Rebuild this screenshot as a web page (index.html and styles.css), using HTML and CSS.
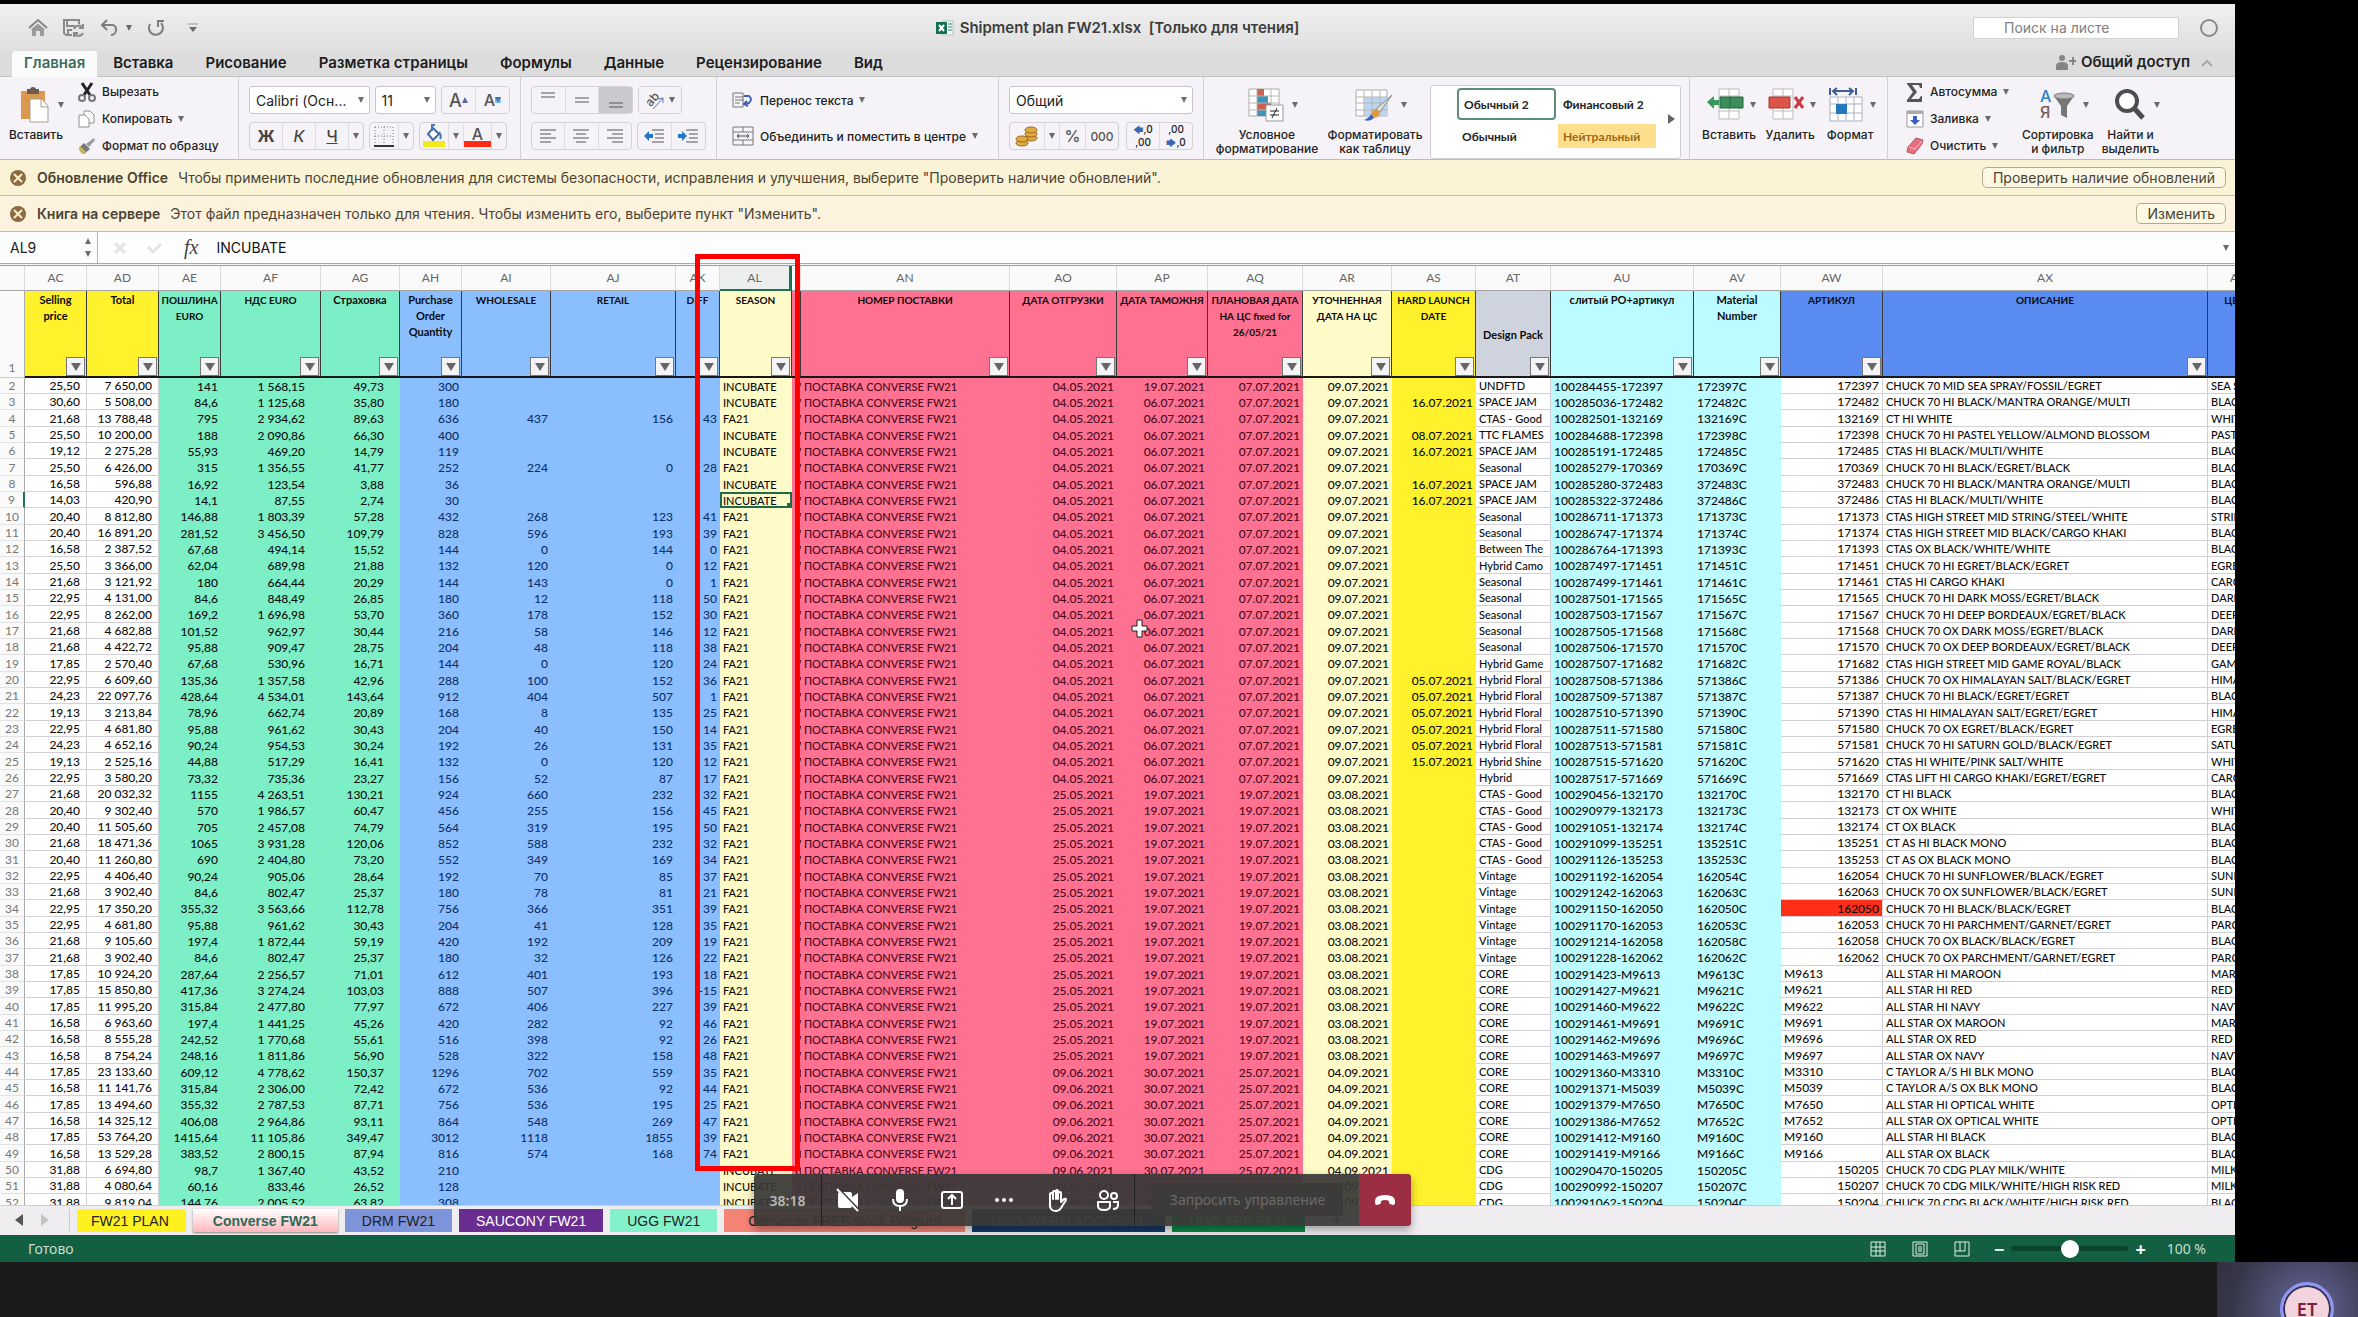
FILE: index.html
```html
<!DOCTYPE html>
<html lang="ru">
<head>
<meta charset="utf-8">
<title>Shipment plan FW21.xlsx</title>
<link rel="stylesheet" href="styles.css">
</head>
<body>
<div class="stage">
  <main class="window">
    <header class="titlebar">
      <div class="quick">
        <button aria-label="Домой"><svg width="20" height="20" viewBox="0 0 20 20"><path d="M1 10 10 2l9 8M4 12l6-5 6 5" fill="none" stroke="#858585" stroke-width="2"/><path d="M4 11l6-5 6 5v7h-4v-5H8v5H4z" fill="#9a9a9a"/></svg></button>
        <button aria-label="Сохранить"><svg width="22" height="20" viewBox="0 0 22 20" fill="none" stroke="#8a8a8a" stroke-width="2"><path d="M9 17H3l-2-2V2h15v4M4 2v6h8M5 17v-5h4"/><path d="M20 10a5 5 0 0 0-9 1M11 15a5 5 0 0 0 9 0M20 6v4h-4M11 19v-4h4"/></svg></button>
        <button class="undo" aria-label="Отменить"><svg width="20" height="20" viewBox="0 0 20 20" fill="none" stroke="#7c7c7c" stroke-width="2"><path d="M7 2 2 7l5 5M2 7h10a4 4 0 0 1 4 4v1a5 5 0 0 1-5 5"/></svg><span class="tri"></span></button>
        <button aria-label="Повторить"><svg width="20" height="20" viewBox="0 0 20 20" fill="none" stroke="#7c7c7c" stroke-width="2"><path d="M3 6a7 7 0 1 0 11-1M11 9V3h6"/></svg></button>
        <button class="more" aria-label="Настроить панель"><svg width="14" height="14" viewBox="0 0 14 14"><path d="M2 3h10" stroke="#999" stroke-width="1"/><path d="M3 6h8l-4 5z" fill="#6d6d6d"/></svg></button>
      </div>
      <h1 class="doc"><svg width="18" height="16" viewBox="0 0 18 16"><path d="M7 1h10v14H7z" fill="#fff" stroke="#9fc5b4"/><path d="M12 4h4M12 7h4M12 10h4" stroke="#1d8060"/><path d="M0 2h11v12H0z" fill="#14704f"/><path d="m3 5 5 6M8 5l-5 6" stroke="#fff" stroke-width="2"/></svg>Shipment plan FW21.xlsx&nbsp; [Только для чтения]</h1>
      <div class="find">
        <input type="text" placeholder="Поиск на листе" aria-label="Поиск на листе">
        <svg width="20" height="20" viewBox="0 0 20 20"><circle cx="10" cy="10" r="8" fill="none" stroke="#8a8a8a" stroke-width="2"/></svg>
      </div>
    </header>
    <nav class="tabs">
      <button class="tab active">Главная</button><button class="tab">Вставка</button><button class="tab">Рисование</button><button class="tab">Разметка страницы</button><button class="tab">Формулы</button><button class="tab">Данные</button><button class="tab">Рецензирование</button><button class="tab">Вид</button>
      <button class="share"><svg width="20" height="16" viewBox="0 0 20 16" fill="#858585"><circle cx="6" cy="4" r="3"/><path d="M0 16v-4q0-4 6-4t6 4v4zM13 6h3V3h2v3h2v2h-2v3h-2V8h-3z"/></svg>Общий доступ</button>
      <svg class="chev" width="16" height="12" viewBox="0 0 16 12"><path d="m3 8 5-5 5 5" fill="none" stroke="#a9a9a9" stroke-width="2"/></svg>
    </nav>

    <section class="ribbon">
      <div class="group clip">
        <button class="big"><span class="pic"><svg width="30" height="36" viewBox="0 0 30 36"><path d="M1 4h24v28H1z" fill="#d99a4e"/><path d="M7 2h12v5H7z" fill="#6d5a52"/><circle cx="13" cy="3" r="3" fill="#6d5a52"/><path d="M10 12h12l6 7v16H10z" fill="#fff" stroke="#a59d8c"/><path d="M21 12v8h7" fill="none" stroke="#a59d8c"/></svg><span class="tri"></span></span>Вставить</button>
        <div class="lines">
          <button><svg width="18" height="20" viewBox="0 0 18 20" fill="none"><path d="m4 1 8 12M14 1 6 13" stroke="#222" stroke-width="3"/><circle cx="4" cy="16" r="3" stroke="#777" stroke-width="2"/><circle cx="14" cy="16" r="3" stroke="#777" stroke-width="2"/></svg>Вырезать</button>
          <button><svg width="18" height="18" viewBox="0 0 18 18" fill="#fff" stroke="#8e8e8e"><path d="M6 1h6l4 4v8H6z"/><path d="M1 5h6l4 4v8H1z"/></svg>Копировать<span class="tri"></span></button>
          <button><svg width="18" height="18" viewBox="0 0 18 18"><path d="m16 1 1 2-6 7-3-3z" fill="#999"/><path d="m6 6 6 6-6 5-5-6z" fill="#767a80"/><path d="m2 9 6 6-4 2-3-4z" fill="#c9b84e"/></svg>Формат по образцу</button>
        </div>
      </div>
      <div class="group stack font">
        <div class="row">
          <span class="sel face"><select aria-label="Шрифт"><option>Calibri (Осн...</option></select></span>
          <span class="sel size"><select aria-label="Размер"><option>11</option></select></span>
          <span class="seg grow"><button class="letter">А<span class="tri up"></span></button><button class="letter small">А<span class="tri blue"></span></button></span>
        </div>
        <div class="row">
          <span class="seg biu"><button><b>Ж</b></button><button><i>К</i></button><button><u>Ч</u></button><button class="thin" aria-label="Подчёркивание"><span class="tri"></span></button></span>
          <span class="seg"><button class="mid" aria-label="Границы"><svg width="20" height="21" viewBox="0 0 20 21"><path d="M1 1h18v18M1 1v18M10 1v18M1 10h18" fill="none" stroke="#777" stroke-dasharray="1 2"/><path d="M0 20h20" stroke="#333" stroke-width="2"/></svg></button><button class="thin" aria-label="Виды границ"><span class="tri"></span></button></span>
          <span class="seg"><button class="mid" aria-label="Цвет заливки"><svg width="24" height="24" viewBox="0 0 24 24"><path d="M1 17h22v6H1z" fill="#f0ea1c"/><path d="m11 4 6 6-6 6-5-6z" fill="#fff" stroke="#456a9c" stroke-width="2"/><path d="M10 7V1h3M17 8q3 4 1 7" stroke="#4878b8" stroke-width="2" fill="none"/></svg></button><button class="thin" aria-label="Другие цвета"><span class="tri"></span></button><button class="mid colour">А</button><button class="thin" aria-label="Цвета текста"><span class="tri"></span></button></span>
        </div>
      </div>
      <div class="group stack">
        <div class="row">
          <span class="seg three"><button aria-label="По верхнему краю"><svg width="18" height="18" viewBox="0 0 18 18" stroke="#555" stroke-width="1"><path d="M2 2h14M2 6h14"/></svg></button><button aria-label="По середине"><svg width="18" height="18" viewBox="0 0 18 18" stroke="#555" stroke-width="1"><path d="M2 7h14M2 11h14"/></svg></button><button class="on" aria-label="По нижнему краю"><svg width="18" height="18" viewBox="0 0 18 18" stroke="#555" stroke-width="1"><path d="M2 12h14M2 16h14"/></svg></button></span>
          <span class="seg orient"><button aria-label="Ориентация"><svg width="20" height="22" viewBox="0 0 20 22"><text x="1" y="14" transform="rotate(-50 8 11)" font-size="12" fill="#555">ab</text><path d="m8 20 10-11M18 9v5M18 9l-5 1" stroke="#6b78a0" fill="none"/></svg><span class="tri"></span></button></span>
        </div>
        <div class="row">
          <span class="seg three"><button aria-label="По левому краю"><svg width="18" height="16" viewBox="0 0 18 16" stroke="#555"><path d="M1 2h16M1 6h11M1 10h16M1 14h11"/></svg></button><button aria-label="По центру"><svg width="18" height="16" viewBox="0 0 18 16" stroke="#555"><path d="M1 2h16M4 6h10M1 10h16M4 14h10"/></svg></button><button aria-label="По правому краю"><svg width="18" height="16" viewBox="0 0 18 16" stroke="#555"><path d="M1 2h16M6 6h11M1 10h16M6 14h11"/></svg></button></span>
          <span class="seg two"><button aria-label="Уменьшить отступ"><svg width="20" height="16" viewBox="0 0 20 16"><path d="M8 2h12M11 6h9M11 10h9M8 14h12" stroke="#555"/><path d="M0 8l5-5v3h4v4H5v3z" fill="#2277cc"/></svg></button><button aria-label="Увеличить отступ"><svg width="20" height="16" viewBox="0 0 20 16"><path d="M8 2h12M11 6h9M11 10h9M8 14h12" stroke="#555"/><path d="M9 8 4 3v3H0v4h4v3z" fill="#2277cc"/></svg></button></span>
        </div>
      </div>
      <div class="group stack wrap">
        <button class="flat"><svg width="22" height="18" viewBox="0 0 22 18" fill="none"><path d="M1 2h10v14H1zM3 6h9M3 9h9M3 12h5" stroke="#777"/><path d="M12 5h5q4 3 0 7l-4 1M15 10l-3 3 4 2" stroke="#4462b0" stroke-width="2"/></svg>Перенос текста<span class="tri"></span></button>
        <button class="flat"><svg width="22" height="20" viewBox="0 0 22 20" fill="none" stroke="#777"><path d="M1 1h20v18H1zM1 6h20M1 14h20M11 1v5M11 14v5"/><path d="M5 10h12M7 8l-2 2 2 2M15 8l2 2-2 2" stroke="#444"/></svg>Объединить и поместить в центре<span class="tri"></span></button>
      </div>
      <div class="group stack number">
        <span class="sel"><select aria-label="Числовой формат"><option>Общий</option></select></span>
        <div class="row">
          <span class="seg money"><button aria-label="Денежный"><svg width="24" height="22" viewBox="0 0 24 22" fill="#e0ab3c" stroke="#96661c"><ellipse cx="16" cy="13" rx="6" ry="3"/><ellipse cx="16" cy="9" rx="6" ry="3"/><ellipse cx="16" cy="5" rx="6" ry="3"/><ellipse cx="7" cy="18" rx="6" ry="3"/><ellipse cx="7" cy="14" rx="6" ry="3"/></svg></button><button class="thin" aria-label="Валюты"><span class="tri"></span></button><button class="pct">%</button><button class="zeros">000</button></span>
          <span class="seg dec"><button><span class="arrow">🡄</span>,0<br>,00</button><button>,00<br><span class="arrow">🡆</span>,0</button></span>
        </div>
      </div>
      <div class="group styles">
        <button class="big"><span class="pic"><svg width="36" height="34" viewBox="0 0 36 34"><path d="M1 1h30v27H1z" fill="#fff" stroke="#aaa"/><path d="M9 1h7v7H9z" fill="#c9624e"/><path d="M9 8h11v7H9z" fill="#3c92b8"/><path d="M9 15h14v7H9z" fill="#c9624e"/><path d="M9 22h9v6H9z" fill="#3c92b8"/><path d="M1 8h30M1 15h30M1 22h30M9 1v27M23 1v27" stroke="#b5b5b5" fill="none"/><path d="M18 17h17v16H18z" fill="#fff" stroke="#999"/><path d="M22 23h9M22 27h9M29 20l-5 10" stroke="#222"/></svg><span class="tri"></span></span>Условное<br>форматирование</button>
        <button class="big"><span class="pic"><svg width="38" height="34" viewBox="0 0 38 34"><path d="M1 2h31v26H1z" fill="#fff" stroke="#aaa"/><path d="M9 9h23v19H9z" fill="#bcd6f2"/><path d="M1 9h31M1 15h31M1 22h31M9 2v26M17 2v26M25 2v26" stroke="#b5b5b5" fill="none"/><path d="m37 7-12 17-4-3z" fill="#ddd" stroke="#888"/><path d="M25 24q0 5-6 6l-3-4q2-5 5-5z" fill="#e09a3c"/><path d="M19 30q-4 4-10 2 5-2 7-6z" fill="#3a62c9"/></svg><span class="tri"></span></span>Форматировать<br>как таблицу</button>
        <div class="gallery">
          <button class="style picked">Обычный 2</button><button class="style">Финансовый 2</button>
          <button class="style">Обычный</button><button class="style neutral">Нейтральный</button>
          <span class="next"></span>
        </div>
      </div>
      <div class="group cells">
        <button class="big"><span class="pic"><svg width="38" height="34" viewBox="0 0 38 34"><path d="M13 1h20v30H13zM13 8h20M13 23h20M23 1v30" fill="#fff" stroke="#bbb"/><path d="M14 9h23v11H14z" fill="#3c8d5c" stroke="#27643e"/><path d="M24 9v11" stroke="#27643e"/><path d="m1 14 7-6v4h5v5H8v4z" fill="#379a58"/></svg><span class="tri"></span></span>Вставить</button>
        <button class="big"><span class="pic"><svg width="36" height="34" viewBox="0 0 36 34"><path d="M5 1h20v30H5zM5 8h20M5 23h20M15 1v30" fill="#fff" stroke="#bbb"/><path d="M1 9h21v11H1z" fill="#dc5347" stroke="#a8352c"/><path d="m27 9 8 11M35 9l-8 11" stroke="#cc3845" stroke-width="3"/></svg><span class="tri"></span></span>Удалить</button>
        <button class="big"><span class="pic"><svg width="36" height="36" viewBox="0 0 36 36"><path d="M2 10h32v24H2zM2 17h32M2 26h32M10 10v24M18 10v24M26 10v24" fill="#fff" stroke="#a9b0bd"/><path d="M8 17h11v10H8z" fill="#2377bd"/><path d="M2 1v7M28 1v7M5 4h20M9 1 5 4l4 4M21 1l4 3-4 4" fill="none" stroke="#3d5f93" stroke-width="2"/></svg><span class="tri"></span></span>Формат</button>
      </div>
      <div class="group edit">
        <div class="lines">
          <button><svg width="18" height="20" viewBox="0 0 18 20"><path d="M1 1h15v5h-2L13 3H6l5 7-6 7h8l2-3h1v6H1v-2l6-8-6-8z" fill="#555"/></svg>Автосумма<span class="tri"></span></button>
          <button><svg width="18" height="18" viewBox="0 0 18 18"><path d="M1 1h16v16H1z" fill="#fff" stroke="#999"/><path d="M1 1h16v3H1z" fill="#aaa"/><path d="M7 6h4v4h3l-5 5-5-5h3z" fill="#3a5fc0"/></svg>Заливка<span class="tri"></span></button>
          <button><svg width="18" height="18" viewBox="0 0 18 18"><path d="m10 1 7 2-1 4-8 10-7-2 1-5z" fill="#e86f7d" stroke="#b65561"/><path d="m3 10 6 2 7-8" fill="none" stroke="#fbc3c8"/></svg>Очистить<span class="tri"></span></button>
        </div>
        <button class="big"><span class="pic"><svg width="36" height="34" viewBox="0 0 36 34"><text x="1" y="14" font-size="16" fill="#2b83cb">А</text><text x="1" y="30" font-size="16" fill="#7b5d55">Я</text><path d="M15 8h20l-7 10v12l-6-3V18z" fill="#777"/><ellipse cx="25" cy="8" rx="10" ry="3" fill="#bbb" stroke="#777"/></svg><span class="tri"></span></span>Сортировка<br>и фильтр</button>
        <button class="big"><span class="pic"><svg width="32" height="34" viewBox="0 0 32 34"><circle cx="13" cy="13" r="10" fill="#fff" stroke="#4d4d4d" stroke-width="4"/><path d="m20 20 9 10" stroke="#4d4d4d" stroke-width="5"/></svg><span class="tri"></span></span>Найти и<br>выделить</button>
      </div>
    </section>

    <div class="notice gold">
      <svg width="18" height="18" viewBox="0 0 18 18"><circle cx="9" cy="9" r="8" fill="#8d6a41"/><path d="m5 5 8 8M13 5l-8 8" stroke="#fdf0cf" stroke-width="2"/></svg>
      <strong>Обновление Office</strong><span>Чтобы применить последние обновления для системы безопасности, исправления и улучшения, выберите "Проверить наличие обновлений".</span>
      <button>Проверить наличие обновлений</button>
    </div>
    <div class="notice">
      <svg width="18" height="18" viewBox="0 0 18 18"><circle cx="9" cy="9" r="8" fill="#8d6a41"/><path d="m5 5 8 8M13 5l-8 8" stroke="#fdf0cf" stroke-width="2"/></svg>
      <strong>Книга на сервере</strong><span>Этот файл предназначен только для чтения. Чтобы изменить его, выберите пункт "Изменить".</span>
      <button>Изменить</button>
    </div>

    <div class="formula">
      <div class="namebox"><input type="text" value="AL9" aria-label="Имя ячейки"><span class="spin"><span class="tri up"></span><span class="tri"></span></span></div>
      <svg class="marks" width="50" height="16" viewBox="0 0 50 16" fill="none" stroke="#e4e4e4" stroke-width="3"><path d="m3 3 10 10M13 3 3 13M36 7l5 5 8-8"/></svg>
      <span class="fx">fx</span>
      <input class="value" type="text" value="INCUBATE" aria-label="Строка формул">
      <span class="tri"></span>
    </div>

    <section class="sheet">
      <table class="grid">
        <colgroup><col class="w25"><col class="w62"><col class="w72"><col class="w62"><col class="w100"><col class="w79"><col class="w62"><col class="w89"><col class="w125"><col class="w44"><col class="w72"><col class="w9"><col class="w209"><col class="w107"><col class="w91"><col class="w95"><col class="w89"><col class="w84"><col class="w75"><col class="w143"><col class="w87"><col class="w102"><col class="w325"><col></colgroup>
        <thead>
          <tr class="letters"><td></td><th>AC</th><th>AD</th><th>AE</th><th>AF</th><th>AG</th><th>AH</th><th>AI</th><th>AJ</th><th>AK</th><th class="cur">AL</th><th></th><th>AN</th><th>AO</th><th>AP</th><th>AQ</th><th>AR</th><th>AS</th><th>AT</th><th>AU</th><th>AV</th><th>AW</th><th>AX</th><th>AY</th></tr>
          <tr class="titles"><th class="num">1</th><th class="yellow">Selling price</th><th class="yellow">Total</th><th class="green upper">ПОШЛИНА EURO</th><th class="green upper">НДС EURO</th><th class="green">Страховка</th><th class="blue">Purchase Order Quantity</th><th class="blue upper">WHOLESALE</th><th class="blue upper">RETAIL</th><th class="blue upper">DIFF</th><th class="cream upper">SEASON</th><th class="pink bare"></th><th class="pink upper">НОМЕР ПОСТАВКИ</th><th class="pink upper">ДАТА ОТГРУЗКИ</th><th class="pink upper">ДАТА ТАМОЖНЯ</th><th class="pink upper">ПЛАНОВАЯ ДАТА НА ЦС fixed for 26/05/21</th><th class="cream upper">УТОЧНЕННАЯ ДАТА НА ЦС</th><th class="yellow upper">HARD LAUNCH DATE</th><th class="grey">Design Pack</th><th class="cyan">слитый PO+артикул</th><th class="cyan">Material Number</th><th class="royal upper">АРТИКУЛ</th><th class="royal upper">ОПИСАНИЕ</th><th class="royal upper bare">ЦВЕТ</th></tr>
        </thead>
        <tbody id="rows"></tbody>
      </table>
      <div class="frame"></div>
      <svg class="pointer" width="17" height="19" viewBox="0 0 17 19"><path d="M6 1h5v6h5v5h-5v6H6v-6H1V7h5z" fill="#fff" stroke="#222"/></svg>
    </section>

    <footer class="books">
      <span class="arrows"><span class="left"></span><span class="right"></span></span>
      <button class="bk lemon">FW21 PLAN</button><button class="bk open">Converse FW21</button><button class="bk drm">DRM FW21</button><button class="bk violet">SAUCONY FW21</button><button class="bk mint">UGG FW21</button><button class="bk coral">Converse FREE stock Belgium</button><button class="bk navy">UGG WARM ACC FW21</button><button class="bk forest">UGG APP FA21</button><button class="plus">+</button>
    </footer>
    <div class="status">
      <span>Готово</span>
      <div class="views">
        <button aria-label="Обычный вид"><svg width="16" height="16" viewBox="0 0 16 16" fill="none" stroke="#e2f0e8"><path d="M1 1h14v14H1zM1 6h14M1 10h14M6 1v14M10 1v14"/></svg></button>
        <button aria-label="Разметка"><svg width="16" height="16" viewBox="0 0 16 16" fill="none" stroke="#e2f0e8"><path d="M1 1h14v14H1zM4 3h8v10H4zM6 6h4M6 8h4M6 10h4"/></svg></button>
        <button aria-label="Страничный"><svg width="16" height="16" viewBox="0 0 16 16" fill="none" stroke="#e2f0e8"><path d="M1 15V1h14v14zM1 10h10V1M6 1v9"/></svg></button>
      </div>
      <div class="zoom"><b>−</b><input type="range" min="0" max="100" value="50" aria-label="Масштаб"><b>+</b></div>
      <span class="pc">100 %</span>
    </div>
  </main>
</div>
<aside class="strip"><div class="person"><span class="avatar">ET</span></div></aside>

<div class="call">
  <span class="time">38:18</span>
  <div class="tools">
    <button aria-label="Камера"><svg width="24" height="24" viewBox="0 0 24 24"><path d="M4 4h10q2 0 2 2v3l6-4v14l-6-4v3q0 2-2 2H4q-2 0-2-2V6q0-2 2-2z" fill="#fff"/><path d="m3 1 20 21" stroke="#3d3b3b" stroke-width="2"/><path d="m1 1 21 22" stroke="#fff" stroke-width="2"/></svg></button>
    <button aria-label="Микрофон"><svg width="20" height="24" viewBox="0 0 20 24"><rect x="6" y="1" width="8" height="14" rx="4" fill="#fff"/><path d="M3 11q0 7 7 7t7-7M10 18v5" fill="none" stroke="#fff" stroke-width="2"/></svg></button>
    <button aria-label="Демонстрация"><svg width="24" height="24" viewBox="0 0 24 24" fill="none" stroke="#fff" stroke-width="2"><rect x="2" y="4" width="20" height="16" rx="2"/><path d="M12 17V8M8 11l4-4 4 4"/></svg></button>
    <button aria-label="Ещё"><svg width="20" height="24" viewBox="0 0 20 24" fill="#fff"><circle cx="3" cy="12" r="2"/><circle cx="10" cy="12" r="2"/><circle cx="17" cy="12" r="2"/></svg></button>
    <button aria-label="Поднять руку"><svg width="22" height="24" viewBox="0 0 22 24" fill="none" stroke="#fff" stroke-width="2" stroke-linejoin="round"><path d="M5 14V6q0-1 1-1t2 1v5-7q0-1 1-1t2 1v7-8q0-1 1-1t1 1v8-6q0-1 2-1 1 0 1 1v9l3-3q2-1 2 1l-5 8q-2 3-5 3-7 0-6-8z"/></svg></button>
    <button aria-label="Участники"><svg width="24" height="24" viewBox="0 0 24 24" fill="none" stroke="#fff" stroke-width="2"><circle cx="8" cy="7" r="4"/><circle cx="18" cy="8" r="3"/><path d="M2 14h12v4q0 4-6 4t-6-4zM17 14h5v3q0 4-5 4"/></svg></button>
  </div>
  <div class="ask"><button>Запросить управление</button></div>
  <button class="hang" aria-label="Завершить"><svg width="22" height="14" viewBox="0 0 22 14"><path d="M1 8q0-6 10-6t10 6v2q0 2-2 2l-3-1q-1 0-1-2V8q-4-2-8 0v1q0 2-1 2l-3 1q-2 0-2-2z" fill="#fff"/></svg></button>
</div>
<script src="rows.js"></script>
</body>
</html>
```
FILE: styles.css
```css
* { box-sizing: border-box; }
body { margin: 0; height: 100vh; display: flex; flex-direction: column; background: #1a1a1a; font-family: Inter, "Noto Sans", sans-serif; color: #222; overflow: hidden; }
button, input, select { font: inherit; color: inherit; border: 0; background: none; padding: 0; margin: 0; }
svg { display: block; flex: none; overflow: visible; }
.stage { flex: 1; min-height: 0; display: flex; background: #000; padding: 4px 123px 0 0; }
.window { flex: 1; min-width: 0; display: flex; flex-direction: column; background: #f5f3f8; }
.tri { width: 0; height: 0; border: 3px solid transparent; border-top: 6px solid #6b6b6b; border-bottom: 0; flex: none; }
.tri.up { border-top: 0; border-bottom: 6px solid #5c679b; }
.tri.blue { border-top-color: #4478a8; }

.titlebar { height: 47px; flex: none; display: grid; grid-template-columns: 1fr auto 1fr; align-items: center; background: linear-gradient(#f0f0f0, #dfdfdf); }
.quick { display: flex; align-items: center; gap: 15px; padding-left: 28px; }
.quick .undo { display: flex; align-items: center; gap: 6px; }
.quick .more { padding-left: 4px; }
.doc { margin: 0; font-size: 15px; font-weight: 600; color: #3d3d3d; display: flex; align-items: center; gap: 6px; }
.find { justify-self: end; display: flex; align-items: center; gap: 20px; padding-right: 16px; }
.find input { width: 206px; height: 22px; background: #fff; border: 1px solid #d2d2d2; padding-left: 30px; font-size: 14px; }
.find input::placeholder { color: #808080; }

.tabs { height: 26px; flex: none; display: flex; align-items: center; padding: 0 20px 0 12px; background: #dcdcdc; border-bottom: 1px solid #c3c3c3; }
.tab { height: 26px; padding: 0 16px 2px; font-size: 15px; font-weight: 600; color: #1c1c1c; }
.tab.active { padding: 0 12px 2px; background: #fbfbfc; color: #3a6e5c; border-radius: 3px 3px 0 0; }
.share { margin-left: auto; display: flex; align-items: center; gap: 5px; padding-bottom: 4px; font-size: 15px; font-weight: 600; }
.chev { margin-left: 9px; }

.ribbon { height: 83px; flex: none; display: grid; grid-template-columns: 239px 282px 196px 282px 205px 486px 198px 1fr; border-bottom: 1px solid #bdbbbd; font-size: 12px; font-weight: 500; }
.group { display: flex; padding: 9px 10px 4px; border-right: 1px solid #d2d0d4; }
.group:last-child { border: 0; }
.big { display: flex; flex-direction: column; align-items: center; line-height: 14px; text-align: center; white-space: nowrap; }
.pic { height: 38px; display: flex; align-items: center; gap: 8px; margin-bottom: 4px; padding-left: 12px; }
.clip { padding-left: 8px; gap: 14px; }
.lines { display: grid; grid-template-rows: repeat(3, 27px); margin-top: -8px; }
.lines button { display: flex; align-items: center; gap: 6px; white-space: nowrap; }
.stack { flex-direction: column; gap: 8px; }
.row { display: flex; gap: 5px; height: 28px; }
.sel { display: flex; align-items: center; position: relative; height: 28px; background: #fff; border: 1px solid #c6c4c8; border-radius: 3px; }
.sel::after { content: ""; position: absolute; right: 5px; border: 3px solid transparent; border-top: 6px solid #6b6b6b; border-bottom: 0; }
.sel select { appearance: none; width: 100%; height: 26px; padding-left: 6px; font-size: 14px; font-weight: 400; }
.face { width: 122px; }
.size { width: 62px; }
.seg { display: flex; border: 1px solid #d3d1d6; border-radius: 4px; }
.seg button { display: flex; align-items: center; justify-content: center; }
.seg button + button { border-left: 1px solid #dedce1; }
.grow { width: 70px; }
.letter { flex: 1; font-size: 18px; color: #555; }
.letter.small { font-size: 16px; }
.biu { width: 115px; font-size: 16px; color: #444; }
.biu button { flex: 1; }
.seg .thin, .biu .thin { flex: none; width: 15px; }
.mid { width: 28px; }
.colour { font-size: 16px; line-height: 16px; color: #555; padding: 0 4px 5px; }
.seg .colour { box-shadow: inset 0 -6px #ff2b12; margin: 2px 0; }
.three { width: 102px; }
.three button, .two button { flex: 1; }
.on { background: #cbc9ce; }
.orient { width: 44px; }
.orient button { flex: 1; gap: 4px; }
.two { width: 70px; }
.wrap { padding-left: 15px; }
.flat { display: flex; align-items: center; gap: 6px; height: 28px; white-space: nowrap; }
.money { width: 110px; color: #555; }
.money button { width: 34px; }
.money .pct { width: 26px; flex: none; font-size: 16px; }
.money .zeros { flex: 1; font-size: 12px; }
.number .row { gap: 7px; }
.dec { flex: 1; }
.seg.dec button { flex: 1; display: block; font-size: 10px; line-height: 13px; }
.arrow { color: #3a67b4; }
.styles { padding-left: 8px; }
.styles .big { width: 110px; }
.styles .big + .big { width: 106px; }
.gallery { flex: 1; margin: -1px -2px 0 2px; display: grid; grid-template: 32px 24px / 99px 98px; gap: 4px 2px; align-content: start; padding: 2px 0 0 26px; background: #fff; border: 1px solid #cfcdd2; border-radius: 3px; position: relative; font-family: Lato, "Noto Sans", sans-serif; font-weight: 700; }
.style { text-align: left; padding-left: 5px; }
.picked { border: 2px solid #5f8c7c; border-radius: 4px; }
.neutral { background: #ffdf8e; color: #9a6a18; }
.next { position: absolute; right: 5px; top: 28px; border: 5px solid transparent; border-left: 7px solid #666; border-right: 0; }
.cells { gap: 8px; padding-left: 12px; }
.cells .pic { padding-left: 4px; gap: 6px; }
.edit { padding-left: 18px; gap: 8px; }
.edit .lines { width: 108px; }

.notice { height: 36px; flex: none; display: flex; align-items: center; gap: 10px; padding: 0 9px; background: #fcf2de; border-bottom: 1px solid #c3bcab; font-size: 14px; color: #4a4334; white-space: nowrap; }
.notice.gold { background: #faf3d6; }
.notice strong { font-weight: 600; }
.notice button { margin-left: auto; height: 21px; padding: 0 10px; border: 1px solid #b3a98c; border-radius: 5px; background: #fdf8e4; }

.formula { height: 32px; flex: none; display: flex; align-items: center; background: #fdfdfd; border-bottom: 1px solid #aaa; padding-right: 6px; }
.namebox { width: 98px; height: 31px; display: flex; align-items: center; justify-content: space-between; padding: 0 6px 0 10px; border-right: 1px solid #b5b5b5; }
.namebox input { width: 60px; font-size: 14px; }
.spin { display: grid; gap: 7px; }
.spin .up { border-bottom-color: #6b6b6b; }
.marks { margin-left: 14px; }
.fx { padding: 0 18px 0 22px; font: italic 20px "Liberation Serif", serif; color: #444; }
.value { flex: 1; font-size: 14px; color: #111; }

.sheet { flex: 1; min-height: 0; position: relative; margin-top: 1px; border-top: 1px solid #9e9e9e; background: #fff; clip-path: inset(-20px 0 0 0); }
.grid { width: calc(100% + 33px); table-layout: fixed; border-collapse: separate; border-spacing: 0; font: 500 12px Lato, "Noto Sans", sans-serif; color: #0c0c0c; }
.w9 { width: 9px; } .w25 { width: 25px; } .w44 { width: 44px; } .w62 { width: 62px; } .w72 { width: 72px; } .w75 { width: 75px; } .w79 { width: 79px; } .w84 { width: 84px; } .w87 { width: 87px; } .w89 { width: 89px; } .w91 { width: 91px; } .w95 { width: 95px; } .w100 { width: 100px; } .w102 { width: 102px; } .w107 { width: 107px; } .w125 { width: 125px; } .w143 { width: 143px; } .w209 { width: 209px; } .w325 { width: 325px; }
.grid td, .grid th { padding: 0 3px; overflow: hidden; white-space: nowrap; line-height: 15px; }
.letters { height: 25px; }
.grid .letters th, .grid .letters td { font-weight: 400; color: #666; background: #fbfafb; border-right: 1px solid #dcdadd; border-bottom: 1px solid #a5a5a5; padding: 0 0 1px; }
.grid .letters .cur { background: #ecefed; border-right: 3px solid #1d7350; border-bottom: 2px solid #1d7350; }
.titles { height: 87px; }
.grid .titles th { position: relative; vertical-align: top; white-space: normal; font-size: 11px; line-height: 16px; padding: 1px 2px; border-right: 1px solid #3a3a3a; border-bottom: 2px solid #181818; }
.grid .titles .upper { font-size: 10px; padding: 1px 0; }
.grid .titles .grey { vertical-align: middle; padding-top: 4px; white-space: nowrap; }
.grid .titles .num { vertical-align: bottom; border-right: 1px solid #aaa; border-bottom: 1px solid #ccc; font-size: 12px; }
.filter { position: absolute; right: 1px; bottom: 0; width: 19px; height: 19px; display: grid; place-items: center; background: #f4f3f5; border: 1px solid #777; }
.filter::before { content: ""; border: 5px solid transparent; border-top: 8px solid #666; border-bottom: 0; }
tbody tr { height: 16px; }
tbody tr:nth-child(3n) { height: 17px; }
.grid .num { font-weight: 400; color: #777; text-align: center; padding: 0; background: #fafafa; border-right: 1px solid #aaa; }
tbody .num { border-bottom: 1px solid #e3e3e3; }
.grid tbody .num.cur { border-right: 2px solid #1d7350; }
.r { text-align: right; }
.grid .p6 { padding-right: 6px; }
.grid .p16 { padding-right: 16px; }
.plain { background: #fff; border-bottom: 1px solid #d3cfd6; border-right: 1px solid #d3cfd6; }
.caps { font-size: 11px; }
.yellow { background: #fff22d; }
.green { background: #7cefc6; }
.blue { background: #8bbeff; }
.cream { background: #fffbc9; }
.pink { background: #ff7190; }
.grey { background: #cfd3de; }
.cyan { background: #bcfbff; }
.royal { background: #5a8bf0; }
.red { background: #ff2f18; }
tbody .blue { color: #0c2f66; }
tbody .pink { color: #4a0a1c; }
.grid .picked-cell { position: relative; box-shadow: inset 0 0 0 2px #1d6b48; }
.picked-cell::after { content: ""; position: absolute; right: 0; bottom: 0; width: 5px; height: 5px; background: #1d6b48; }
.frame { position: absolute; left: 695px; top: -12px; width: 105px; height: 917px; border: 5px solid #f00; }
.pointer { position: absolute; left: 1131px; top: 353px; }

.books { height: 30px; flex: none; display: flex; align-items: flex-start; gap: 7px; padding-top: 3px; background: #efedf0; border-top: 1px solid #cfcdd0; font-family: "Liberation Sans", sans-serif; font-size: 14px; }
.arrows { display: flex; gap: 18px; width: 70px; height: 22px; padding: 5px 0 0 15px; border-right: 1px solid #ccc; }
.left { border: 6px solid transparent; border-right: 8px solid #555; border-left: 0; height: 0; }
.right { border: 6px solid transparent; border-left: 8px solid #c4c4c4; border-right: 0; height: 0; }
.bk { height: 23px; white-space: nowrap; padding: 0 17px; color: #222; }
.lemon { background: #fff01f; padding: 0 17px 0 14px; }
.open { background: linear-gradient(#fff, #ffb7bd); color: #2d6a58; font-weight: 700; padding: 0 20px; box-shadow: 0 1px 2px #888; }
.drm { background: #7d93da; }
.violet { background: #6a2d91; color: #fff; }
.mint { background: #83f2cb; }
.coral { background: #f58376; padding: 0 24px; }
.navy { background: #143a68; color: #8fa6c0; padding: 0 20px; }
.forest { background: #0b8a48; color: #9bd0b0; }
.plus { font-size: 20px; color: #666; padding: 0 18px; line-height: 22px; }

.status { height: 27px; flex: none; display: flex; align-items: center; padding: 0 29px 0 28px; background: #135f41; color: #c9ddd2; font-family: "Noto Sans", sans-serif; font-size: 14px; }
.views { margin-left: auto; display: flex; gap: 26px; }
.zoom { display: flex; align-items: center; gap: 7px; margin-left: 24px; color: #fff; font-size: 18px; }
.zoom input { appearance: none; width: 117px; height: 5px; border-radius: 3px; background: #0a442c; }
.zoom input::-webkit-slider-thumb { appearance: none; width: 18px; height: 18px; border-radius: 50%; background: #fff; }
.pc { margin-left: 21px; }

.strip { height: 55px; flex: none; display: flex; justify-content: flex-end; }
.person { width: 141px; overflow: hidden; padding: 20px 0 0 63px; background: radial-gradient(circle at 90px 48px, #67689c, #37374a 75px, #303040); }
.avatar { width: 54px; height: 54px; display: grid; place-items: center; border-radius: 50%; border: 3px solid #8f95f5; box-shadow: inset 0 0 0 2px #343254; background: #f3d3dd; color: #7c1d3c; font: 600 18px/1 "Noto Sans", sans-serif; }

.call { position: absolute; left: 754px; bottom: 91px; height: 52px; display: flex; border-radius: 4px; overflow: hidden; background: rgba(57, 56, 55, .93); box-shadow: 0 4px 10px rgba(0, 0, 0, .35); font-family: "Noto Sans", sans-serif; font-size: 14px; }
.time { width: 68px; display: grid; place-items: center; color: #b9b7b7; font-weight: 600; border-right: 1px solid #222; }
.tools { display: grid; grid-template-columns: repeat(6, 52px); border-right: 1px solid #222; }
.tools button { display: grid; place-items: center; }
.ask { padding: 9px 16px 10px 17px; }
.ask button { width: 191px; height: 33px; border-radius: 3px; background: #3d3b3a; color: #6b6968; font-size: 14px; }
.hang { width: 52px; display: grid; place-items: center; background: #9c2e43; }
```
FILE: rows.js
```js
// AC|AD|AE|AF|AG|AH|AI|AJ|AK|season|delivery|launch|pack|order|article|description
const data = `25,50|7 650,00|141|1 568,15|49,73|300||||I|A||UNDFTD|100284455|172397|CHUCK 70 MID SEA SPRAY/FOSSIL/EGRET
30,60|5 508,00|84,6|1 125,68|35,80|180||||I|A|16.07.2021|SPACE JAM|100285036|172482|CHUCK 70 HI BLACK/MANTRA ORANGE/MULTI
21,68|13 788,48|795|2 934,62|89,63|636|437|156|43|F|A||CTAS - Good|100282501|132169|CT HI WHITE
25,50|10 200,00|188|2 090,86|66,30|400||||I|A|08.07.2021|TTC FLAMES|100284688|172398|CHUCK 70 HI PASTEL YELLOW/ALMOND BLOSSOM
19,12|2 275,28|55,93|469,20|14,79|119||||I|A|16.07.2021|SPACE JAM|100285191|172485|CTAS HI BLACK/MULTI/WHITE
25,50|6 426,00|315|1 356,55|41,77|252|224|0|28|F|A||Seasonal|100285279|170369|CHUCK 70 HI BLACK/EGRET/BLACK
16,58|596,88|16,92|123,54|3,88|36||||I|A|16.07.2021|SPACE JAM|100285280|372483|CHUCK 70 HI BLACK/MANTRA ORANGE/MULTI
14,03|420,90|14,1|87,55|2,74|30||||I|A|16.07.2021|SPACE JAM|100285322|372486|CTAS HI BLACK/MULTI/WHITE
20,40|8 812,80|146,88|1 803,39|57,28|432|268|123|41|F|A||Seasonal|100286711|171373|CTAS HIGH STREET MID STRING/STEEL/WHITE
20,40|16 891,20|281,52|3 456,50|109,79|828|596|193|39|F|A||Seasonal|100286747|171374|CTAS HIGH STREET MID BLACK/CARGO KHAKI
16,58|2 387,52|67,68|494,14|15,52|144|0|144|0|F|A||Between The|100286764|171393|CTAS OX BLACK/WHITE/WHITE
25,50|3 366,00|62,04|689,98|21,88|132|120|0|12|F|A||Hybrid Camo|100287497|171451|CHUCK 70 HI EGRET/BLACK/EGRET
21,68|3 121,92|180|664,44|20,29|144|143|0|1|F|A||Seasonal|100287499|171461|CTAS HI CARGO KHAKI
22,95|4 131,00|84,6|848,49|26,85|180|12|118|50|F|A||Seasonal|100287501|171565|CHUCK 70 HI DARK MOSS/EGRET/BLACK
22,95|8 262,00|169,2|1 696,98|53,70|360|178|152|30|F|A||Seasonal|100287503|171567|CHUCK 70 HI DEEP BORDEAUX/EGRET/BLACK
21,68|4 682,88|101,52|962,97|30,44|216|58|146|12|F|A||Seasonal|100287505|171568|CHUCK 70 OX DARK MOSS/EGRET/BLACK
21,68|4 422,72|95,88|909,47|28,75|204|48|118|38|F|A||Seasonal|100287506|171570|CHUCK 70 OX DEEP BORDEAUX/EGRET/BLACK
17,85|2 570,40|67,68|530,96|16,71|144|0|120|24|F|A||Hybrid Game|100287507|171682|CTAS HIGH STREET MID GAME ROYAL/BLACK
22,95|6 609,60|135,36|1 357,58|42,96|288|100|152|36|F|A|05.07.2021|Hybrid Floral|100287508|571386|CHUCK 70 OX HIMALAYAN SALT/BLACK/EGRET
24,23|22 097,76|428,64|4 534,01|143,64|912|404|507|1|F|A|05.07.2021|Hybrid Floral|100287509|571387|CHUCK 70 HI BLACK/EGRET/EGRET
19,13|3 213,84|78,96|662,74|20,89|168|8|135|25|F|A|05.07.2021|Hybrid Floral|100287510|571390|CTAS HI HIMALAYAN SALT/EGRET/EGRET
22,95|4 681,80|95,88|961,62|30,43|204|40|150|14|F|A|05.07.2021|Hybrid Floral|100287511|571580|CHUCK 70 OX EGRET/BLACK/EGRET
24,23|4 652,16|90,24|954,53|30,24|192|26|131|35|F|A|05.07.2021|Hybrid Floral|100287513|571581|CHUCK 70 HI SATURN GOLD/BLACK/EGRET
19,13|2 525,16|44,88|517,29|16,41|132|0|120|12|F|A|15.07.2021|Hybrid Shine|100287515|571620|CTAS HI WHITE/PINK SALT/WHITE
22,95|3 580,20|73,32|735,36|23,27|156|52|87|17|F|A||Hybrid|100287517|571669|CTAS LIFT HI CARGO KHAKI/EGRET/EGRET
21,68|20 032,32|1155|4 263,51|130,21|924|660|232|32|F|B||CTAS - Good|100290456|132170|CT HI BLACK
20,40|9 302,40|570|1 986,57|60,47|456|255|156|45|F|B||CTAS - Good|100290979|132173|CT OX WHITE
20,40|11 505,60|705|2 457,08|74,79|564|319|195|50|F|B||CTAS - Good|100291051|132174|CT OX BLACK
21,68|18 471,36|1065|3 931,28|120,06|852|588|232|32|F|B||CTAS - Good|100291099|135251|CT AS HI BLACK MONO
20,40|11 260,80|690|2 404,80|73,20|552|349|169|34|F|B||CTAS - Good|100291126|135253|CT AS OX BLACK MONO
22,95|4 406,40|90,24|905,06|28,64|192|70|85|37|F|B||Vintage|100291192|162054|CHUCK 70 HI SUNFLOWER/BLACK/EGRET
21,68|3 902,40|84,6|802,47|25,37|180|78|81|21|F|B||Vintage|100291242|162063|CHUCK 70 OX SUNFLOWER/BLACK/EGRET
22,95|17 350,20|355,32|3 563,66|112,78|756|366|351|39|F|B||Vintage|100291150|162050|CHUCK 70 HI BLACK/BLACK/EGRET
22,95|4 681,80|95,88|961,62|30,43|204|41|128|35|F|B||Vintage|100291170|162053|CHUCK 70 HI PARCHMENT/GARNET/EGRET
21,68|9 105,60|197,4|1 872,44|59,19|420|192|209|19|F|B||Vintage|100291214|162058|CHUCK 70 OX BLACK/BLACK/EGRET
21,68|3 902,40|84,6|802,47|25,37|180|32|126|22|F|B||Vintage|100291228|162062|CHUCK 70 OX PARCHMENT/GARNET/EGRET
17,85|10 924,20|287,64|2 256,57|71,01|612|401|193|18|F|B||CORE|100291423|M9613|ALL STAR HI MAROON
17,85|15 850,80|417,36|3 274,24|103,03|888|507|396|-15|F|B||CORE|100291427|M9621|ALL STAR HI RED
17,85|11 995,20|315,84|2 477,80|77,97|672|406|227|39|F|B||CORE|100291460|M9622|ALL STAR HI NAVY
16,58|6 963,60|197,4|1 441,25|45,26|420|282|92|46|F|B||CORE|100291461|M9691|ALL STAR OX MAROON
16,58|8 555,28|242,52|1 770,68|55,61|516|398|92|26|F|B||CORE|100291462|M9696|ALL STAR OX RED
16,58|8 754,24|248,16|1 811,86|56,90|528|322|158|48|F|B||CORE|100291463|M9697|ALL STAR OX NAVY
17,85|23 133,60|609,12|4 778,62|150,37|1296|702|559|35|F|C||CORE|100291360|M3310|C TAYLOR A/S HI BLK MONO
16,58|11 141,76|315,84|2 306,00|72,42|672|536|92|44|F|C||CORE|100291371|M5039|C TAYLOR A/S OX BLK MONO
17,85|13 494,60|355,32|2 787,53|87,71|756|536|195|25|F|C||CORE|100291379|M7650|ALL STAR HI OPTICAL WHITE
16,58|14 325,12|406,08|2 964,86|93,11|864|548|269|47|F|C||CORE|100291386|M7652|ALL STAR OX OPTICAL WHITE
17,85|53 764,20|1415,64|11 105,86|349,47|3012|1118|1855|39|F|C||CORE|100291412|M9160|ALL STAR HI BLACK
16,58|13 529,28|383,52|2 800,15|87,94|816|574|168|74|F|C||CORE|100291419|M9166|ALL STAR OX BLACK
31,88|6 694,80|98,7|1 367,40|43,52|210||||I|C||CDG|100290470|150205|CHUCK 70 CDG PLAY MILK/WHITE
31,88|4 080,64|60,16|833,46|26,52|128||||I|C||CDG|100290992|150207|CHUCK 70 CDG MILK/WHITE/HIGH RISK RED
31,88|9 819,04|144,76|2 005,52|63,82|308||||I|C||CDG|100291062|150204|CHUCK 70 CDG BLACK/WHITE/HIGH RISK RED`;

const deliveries = {
  A: ['7', '04.05.2021', '06.07.2021', '07.07.2021', '09.07.2021'],
  B: ['7', '25.05.2021', '19.07.2021', '19.07.2021', '03.08.2021'],
  C: ['8', '09.06.2021', '30.07.2021', '25.07.2021', '04.09.2021'],
};
const numberStyles = ['plain r p6', 'plain r p6', 'green r', 'green r p16', 'green r p16', 'blue r', 'blue r', 'blue r', 'blue r'];

const body = document.getElementById('rows');
data.split('\n').forEach((line, i) => {
  const f = line.split('|');
  const row = i + 2;
  const tr = body.insertRow();
  const head = document.createElement('th');
  head.className = row === 9 ? 'num cur' : 'num';
  head.textContent = row;
  tr.append(head);
  const cell = (text, cls) => {
    const td = tr.insertCell();
    td.textContent = text;
    td.className = cls;
  };
  numberStyles.forEach((cls, n) => cell(f[n], cls));
  cell(f[9] === 'I' ? 'INCUBATE' : 'FA21', 'cream caps' + (row === 9 ? ' picked-cell' : ''));
  const d = deliveries[f[10]];
  cell(d[0], 'pink');
  cell('ПОСТАВКА CONVERSE FW21', 'pink caps');
  cell(d[1], 'pink r');
  cell(row === 2 ? '19.07.2021' : d[2], 'pink r');
  cell(d[3], 'pink r');
  cell(d[4], 'cream r');
  cell(f[11], 'yellow r');
  cell(f[12], 'plain caps');
  cell(f[13] + '-' + f[14], 'cyan');
  cell(f[14] + 'C', 'cyan');
  cell(f[14], 'plain' + (f[14][0] === 'M' ? '' : ' r') + (row === 34 ? ' red' : ''));
  cell(f[15], 'plain caps');
  cell(f[15].replace(/^.*\b(HI|OX|MID|PLAY|CDG) /, '').replace('BLK', 'BLACK'), 'plain caps');
});

document.querySelectorAll('.titles th:not(.num):not(.bare)').forEach((th) => {
  const b = document.createElement('button');
  b.className = 'filter';
  b.setAttribute('aria-label', 'Фильтр: ' + th.textContent);
  th.append(b);
});
```
